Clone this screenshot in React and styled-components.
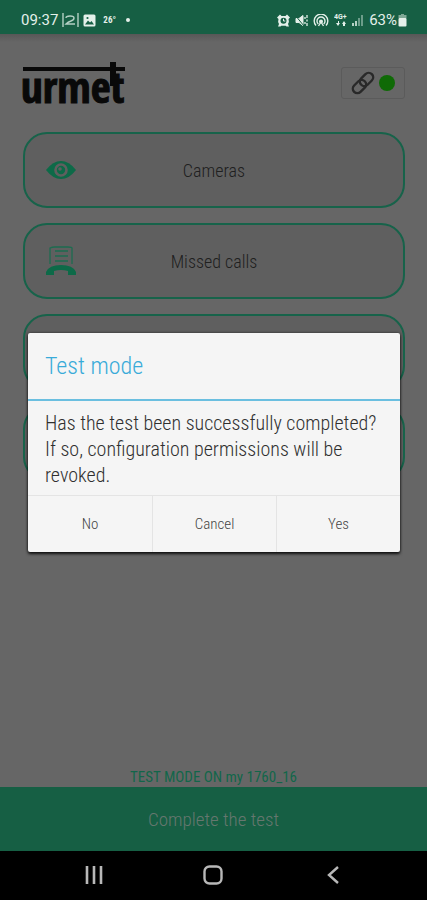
import React from 'react';
import styled, { createGlobalStyle } from 'styled-components';

const GlobalStyle = createGlobalStyle`
    * { box-sizing: border-box; }
    body { margin: 0; background: #666; }
    button { font-family: inherit; font-weight: inherit; border: none; padding: 0; cursor: pointer; }
`;
const Phone = styled.div`
    min-height: 100vh;
    display: flex;
    flex-direction: column;
    background: #666;
    color: #262626;
    font-family: "Roboto Condensed", Roboto, sans-serif;
    font-weight: 300;
`;
const StatusBar = styled.header`
    display: flex;
    align-items: center;
    justify-content: space-between;
    height: 34px;
    padding: 6px 20px 0 21px;
    background: #165f44;
    color: #e4f0ea;
    font: 400 15px Roboto, sans-serif;
`;
const StatusGroup = styled.div`
    display: flex;
    align-items: center;
    gap: ${({ $gap }) => $gap}px;
    svg { display: block; }
`;
const Temp = styled.span`
    font: 700 9px "Roboto Condensed", sans-serif;
    margin: 0 6px 0 3px;
`;
const Dot = styled.span`
    width: 4px;
    height: 4px;
    border-radius: 50%;
    background: #e4f0ea;
`;
const Main = styled.main`
    position: relative;
    flex: 1;
    display: flex;
    flex-direction: column;
`;
const TopRow = styled.div`
    display: flex;
    align-items: center;
    justify-content: space-between;
    padding: 26px 22px 0 23px;
    height: 72px;
    background: linear-gradient(#575757, #666 8px);
`;
const Logo = styled.svg`
    display: block;
    width: 103px;
    height: 46px;
    overflow: visible;
`;
const LinkBadge = styled.button`
    display: flex;
    align-items: center;
    justify-content: center;
    gap: 4px;
    width: 64px;
    height: 32px;
    background: #666;
    && { border: 1px solid #5b5b5b; }
    border-radius: 3px;
`;
const Online = styled.span`
    width: 16px;
    height: 16px;
    border-radius: 50%;
    background: #0f6a06;
`;
const Menu = styled.nav`
    flex: 1;
    display: flex;
    flex-direction: column;
    gap: 15px;
    padding: 26px 22px 0 23px;
`;
const MenuButton = styled.button`
    display: grid;
    grid-template-columns: 32px 1fr 32px;
    align-items: center;
    height: 76px;
    padding: 0 20px;
    background: #5f5f5f;
    && { border: 2px solid #17634a; }
    border-radius: 24px;
    color: #202020;
    font-size: 18px;
    svg { display: block; }
`;
const TestLabel = styled.p`
    margin: 0;
    text-align: center;
    font-size: 15px;
    font-weight: 400;
    line-height: 20px;
    color: #12664a;
`;
const CompleteButton = styled.button`
    height: 64px;
    background: #165f44;
    color: #66776f;
    font-size: 19px;
`;
const Backdrop = styled.div`
    position: absolute;
    inset: 0;
    display: flex;
    align-items: center;
    justify-content: center;
    padding: 0 27px 0 28px;
`;
const Dialog = styled.section`
    width: 100%;
    background: #f5f5f5;
    border-radius: 2px;
    box-shadow: 0 2px 3px #000c, 0 0 3px #0008;
`;
const DialogTitle = styled.h2`
    margin: 0;
    padding: 0 17px;
    line-height: 66px;
    border-bottom: 2px solid #6bbfe0;
    color: #39abd9;
    font-size: 24px;
    font-weight: 300;
`;
const DialogText = styled.p`
    margin: 0;
    padding: 9px 17px 7px;
    font-size: 20px;
    line-height: 26px;
    color: #303030;
`;
const DialogActions = styled.div`
    display: grid;
    grid-template-columns: repeat(3, 1fr);
    border-top: 1px solid #e4e4e4;
`;
const Action = styled.button`
    height: 56px;
    background: none;
    color: #444;
    font-size: 15px;
    && + && { border-left: 1px solid #e4e4e4; }
`;
const NavBar = styled.footer`
    display: flex;
    justify-content: space-around;
    align-items: center;
    height: 49px;
    padding: 0 34px 2px;
    background: #000;
`;
const NavButton = styled.button`
    display: flex;
    background: none;
`;

const PictureIcon = () => (
    <svg width="13" height="13" viewBox="0 0 13 13">
        <rect x="0.5" y="0.5" width="12" height="12" rx="1.5" fill="#e4f0ea" />
        <path d="M2 10.500 5 6.500l2 2 1.500-1.500 2.500 3.500z" fill="#165f44" />
        <circle cx="4.500" cy="4" r="1.100" fill="#165f44" />
    </svg>
);
const NfcIcon = () => (
    <svg width="17" height="14" viewBox="0 0 17 14" fill="none" stroke="#b4d0c4">
        <path d="M1 0v14M16 0v14M4 5q0-2 4-2t4 2-3 3-5 3h9" strokeWidth="1.400" />
    </svg>
);
const AlarmIcon = () => (
    <svg width="13" height="13" viewBox="0 0 13 13">
        <path d="M0 3.500 3 .5l1.500 1.500h4L10 .5l3 3-1.500 1.500q1 3-.5 5l1 2.500H9.500l-.8-.8h-4.400l-.8.8H1l1-2.500q-1.500-2-.5-5z" fill="#e4f0ea" />
        <circle cx="6.500" cy="6.800" r="3" fill="#165f44" />
        <path d="M6.500 4.800v2.200h1.800" fill="none" stroke="#e4f0ea" />
    </svg>
);
const MuteIcon = () => (
    <svg width="13" height="13" viewBox="0 0 13 13" fill="none" stroke="#e4f0ea">
        <path d="M1 4.500h3l4-3v10l-4-3H1z" fill="#e4f0ea" />
        <path d="m0 1 9 11" stroke="#165f44" />
        <path d="M10 3v2M10 8v2M12 1v3M12 5.500v2M12 9v3" strokeWidth="1.300" />
    </svg>
);
const HotspotIcon = () => (
    <svg width="16" height="13" viewBox="0 0 16 13" fill="none" stroke="#e4f0ea" strokeWidth="1.400">
        <path d="M3 11.500a6.800 6.800 0 1 1 10 0M5.300 10a4 4 0 1 1 5.400 0" />
        <circle cx="8" cy="7.500" r="1.300" fill="#e4f0ea" />
        <path d="m8 8-2.500 4M8 8l2.500 4" />
    </svg>
);
const NetworkIcon = () => (
    <svg width="13" height="14" viewBox="0 0 13 14" fill="#e4f0ea">
        <text x="0" y="6" fontSize="7" fontWeight="700">4G+</text>
        <path d="M2 10h2V8h1v2h1l-2 3zM8 11l2-3 2 3h-1v2H9v-2z" />
    </svg>
);
const SignalIcon = () => (
    <svg width="12" height="12" viewBox="0 0 12 12" fill="#b4d0c4">
        <path d="M0 9h2v3H0zM3 7h2v5H3z" />
        <path d="M6 4h2v8H6zM9 1h2v11H9z" opacity=".55" />
    </svg>
);
const BatteryIcon = () => (
    <svg width="9" height="13" viewBox="0 0 9 13">
        <path d="M3 0h3v1h2.500v3H.5V1H3z" fill="#7fa896" />
        <rect x=".5" y="4" width="8" height="8.500" rx="1" fill="#e4f0ea" />
    </svg>
);
const ChainIcon = () => (
    <svg width="24" height="24" viewBox="0 0 24 24" fill="none" stroke="#292929" strokeWidth="2.400">
        <g transform="rotate(-45 12 12)">
            <rect x="-.5" y="7.500" width="15" height="9" rx="4.500" />
            <rect x="9.500" y="7.500" width="15" height="9" rx="4.500" />
        </g>
    </svg>
);
const EyeIcon = () => (
    <svg width="32" height="20" viewBox="0 0 32 20">
        <path d="M1 10Q8 1 16 1t15 9q-7 9-15 9T1 10z" fill="#0d6a48" />
        <circle cx="16" cy="10" r="5.500" fill="none" stroke="#5f5f5f" strokeWidth="2.600" />
        <circle cx="15" cy="9" r="1.800" fill="#5f5f5f" />
    </svg>
);
const MissedIcon = () => (
    <svg width="32" height="32" viewBox="0 0 32 32" fill="none" stroke="#1d6c50">
        <path d="M5 19V3q2-1 5-1h13q4 0 4 1v16" strokeWidth="1.300" />
        <path d="M10 6h13M10 11h13M10 16h13" strokeWidth="1.500" />
        <path d="M1 30v-3q3-7 15-7t15 7v3h-8v-4q-7-2-14 0v4z" fill="#0d6a48" stroke="none" />
    </svg>
);

const items = [
    { label: 'Cameras', icon: <EyeIcon /> },
    { label: 'Missed calls', icon: <MissedIcon /> },
    {},
    {},
];

function App() {
    return (
        <Phone>
            <GlobalStyle />
            <StatusBar>
                <StatusGroup $gap={4}>
                    <span>09:37</span>
                    <NfcIcon />
                    <PictureIcon />
                    <Temp>26°</Temp>
                    <Dot />
                </StatusGroup>
                <StatusGroup $gap={5}>
                    <AlarmIcon />
                    <MuteIcon />
                    <HotspotIcon />
                    <NetworkIcon />
                    <SignalIcon />
                    <StatusGroup $gap={1}>
                        <span>63%</span>
                        <BatteryIcon />
                    </StatusGroup>
                </StatusGroup>
            </StatusBar>
            <Main>
                <TopRow>
                    <Logo viewBox="0 0 103 46" role="img" aria-label="urmet">
                        <text x="-2" y="43" fontSize="43" fontWeight="700" fontFamily="Open Sans Condensed, sans-serif" fill="#090909" stroke="#090909">urmet</text>
                        <path d="M0 7h102v4H0zM87 2h6v24h-6z" fill="#090909" />
                    </Logo>
                    <LinkBadge aria-label="Connection">
                        <ChainIcon />
                        <Online />
                    </LinkBadge>
                </TopRow>
                <Menu>
                    {items.map((item, i) => (
                        <MenuButton key={i} aria-hidden={!item.label}>
                            {item.icon}
                            <span>{item.label}</span>
                        </MenuButton>
                    ))}
                </Menu>
                <TestLabel>TEST MODE ON my 1760_16</TestLabel>
                <CompleteButton>Complete the test</CompleteButton>
                <Backdrop>
                    <Dialog role="dialog" aria-labelledby="dialog-title">
                        <DialogTitle id="dialog-title">Test mode</DialogTitle>
                        <DialogText>
                            Has the test been successfully completed? If so, configuration permissions will be revoked.
                        </DialogText>
                        <DialogActions>
                            <Action>No</Action>
                            <Action>Cancel</Action>
                            <Action>Yes</Action>
                        </DialogActions>
                    </Dialog>
                </Backdrop>
            </Main>
            <NavBar>
                <NavButton aria-label="Recent apps">
                    <svg width="20" height="20" viewBox="0 0 20 20" stroke="#b8b8b8" strokeWidth="2.600">
                        <path d="M3 1v18M10 1v18M17 1v18" />
                    </svg>
                </NavButton>
                <NavButton aria-label="Home">
                    <svg width="20" height="20" viewBox="0 0 20 20" fill="none" stroke="#b8b8b8" strokeWidth="2.400">
                        <rect x="1.500" y="1.500" width="17" height="17" rx="5" />
                    </svg>
                </NavButton>
                <NavButton aria-label="Back">
                    <svg width="20" height="20" viewBox="0 0 20 20" fill="none" stroke="#b8b8b8" strokeWidth="2.400">
                        <path d="M15 2 6 10l9 8" />
                    </svg>
                </NavButton>
            </NavBar>
        </Phone>
    );
}

export default App;
